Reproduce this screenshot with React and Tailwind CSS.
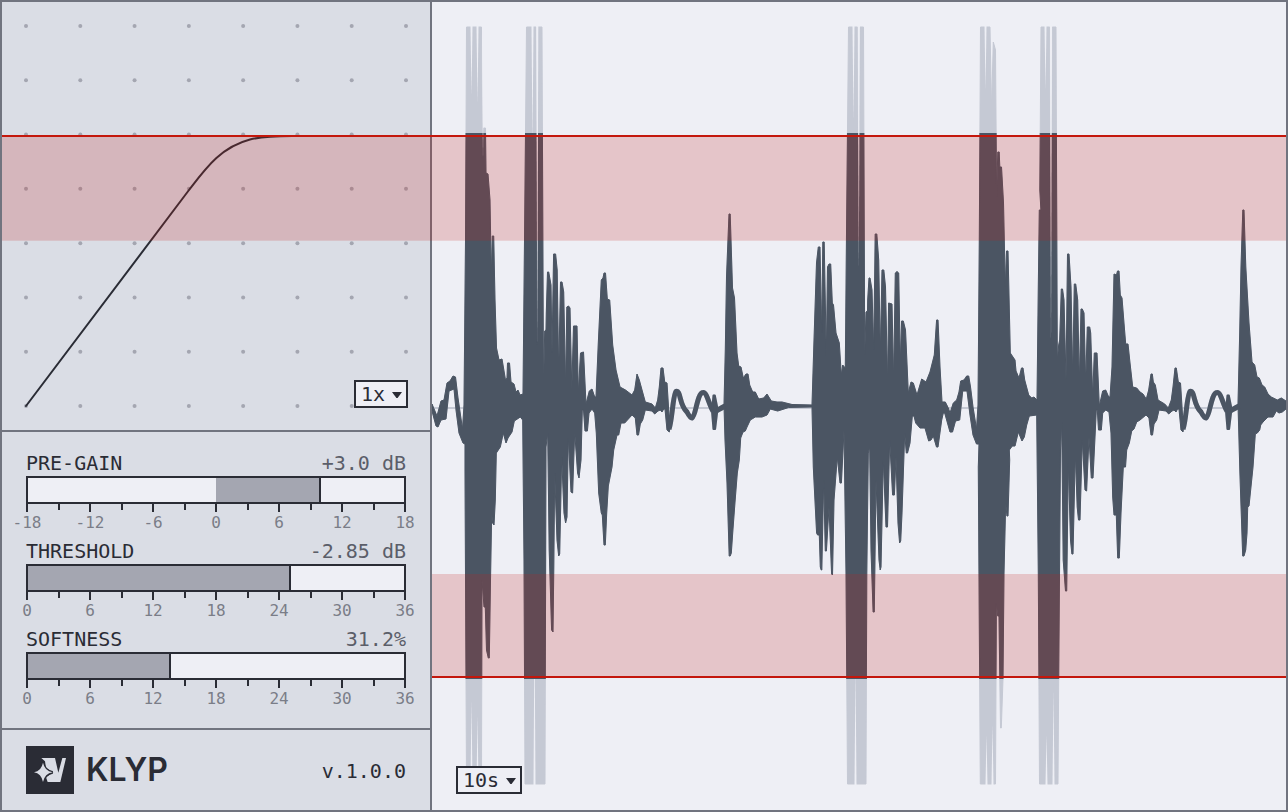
import { useState } from 'react';

// Upper edge left to right, then the lower edge back again.
const WAVE_START =
  'M432 404 L437 416 441 401 444 400 447 383 450 381 453 376 455.5 377 458 398 462.5 429 464 405 465.5 240 466.5 27 481.5 27 482.5 160 483.5 128 485.5 128 486 173 488 174 490 200 491.3 275 492.3 236 493.7 236 495 300 496.5 348 499 360 502 359 505.5 380 507 378 507.5 363 509.5 363 511 382 514 384 516 392 518 390 520 395 523 394 524.5 240 526.5 27 536 27 537 345 538 27 542 27 543.5 390 544.7 331 546 330 546.3 313 547.5 272 548.7 272 551 285 552 353 553.6 254 555.6 254 557.2 270 558.7 373 560.5 282 562 282 563.7 292 565.6 387 566.8 307 568.5 306 570 308 571.8 390 573.5 326 577 326 578.3 393 580.5 353 583.5 352 586 404 589.3 391 592 389 594.7 397 596 397 598.3 343 601.3 280 603 278 604 273 605.5 273 607.3 299 609.7 300 612.7 345 616 370 620 387 625.5 390 632 395 634.7 390 637 374 639.3 380 642 390 645.3 402 652 404 655.3 408 657.7 400 659.3 387 661 368 663 368 664.7 382 667 383 669 415 671 420 669.3 432 667 430 665 409 663.7 409 662 412 660.3 410 658 411 654.7 414 652 411 645.3 410 642.7 420 640.3 424 638.5 435 637 435 635.3 418 632 415 624.7 423 621 423 618.7 435 617 435 613.7 450 612 467 608.3 486 606.7 513 605.3 545 604 545 602.3 515 601.3 513 598.7 493 596.3 433 594.7 413 592 409 589 413 587.4 431 585 431 583.5 410 582.3 410 581 460 579 478 577.6 473 574.7 432 572.6 493 571 492 568.3 437 567 517 565.6 523 564 513 561.7 457 559.7 554 558.7 556 557 540 554.7 473 553.8 567 553 632 551.6 630 549.2 550 547.7 433 546 447 545 784 525 784 524 560 522.7 420 520.3 417 514.3 421 512 432 508 438 506 443 503.3 433 500.3 447 496.3 453 495.3 500 494 525 492.6 523 491.7 513 490.5 580 489.3 658 488.3 658 486.5 650 485.3 607 484 607 482 580 481.5 784 466.5 784 465 470 465 444 463 443 459 433 456 410 454 389 449 391 446 419 441 420 438 427 436 426 432 411 Z';

const WAVE_MIDDLE =
  'M724 405 L725.3 350 726.5 277 729 214 730.2 214 732.5 288 734.5 298 737 353 738.7 366 741 367 743.3 378 746 374 748 374 749.7 385 752.7 392 755.3 392 758.7 399 763.7 398 767 394 771.3 401 777 402 782 402 792 404.5 812 405 814 340 816.5 263 818.3 247 820 247 821.7 333 822.8 242 824.2 242 826.3 357 827.5 267 829 264 830.7 264 832.3 303 833.5 305 836 333 839.3 343 841.3 375 842.7 365 845.3 368 846.5 233 848.5 27 857.5 27 858.7 260 860 27 863.5 27 864.7 355 866 312 867.5 311 867.7 300 869 278 870 278 872 290 873.7 350 875.2 234 876.8 234 878.7 260 880.3 353 882 270 883.8 270 885.5 287 887.6 383 888.6 303 892 304 893.6 380 895.3 273 897 271.5 898.7 273 900.3 363 901.6 321 903.3 321 905.5 330 908.3 393 911 382 913.3 383 917 395 921.7 379 926 382 930 372 934.3 355 936.6 320 938 320 940 367 942 402 945.3 402 948.3 408 950 413 953.3 403 956.7 400 959 392 960.7 381 964 380 966.7 376 968.7 376 970.5 387 973 407 976.5 429 978 405 979.3 240 980.5 27 990 27 991.5 110 993.3 42 995.5 50 996.6 197 997.8 152 999.2 152 999.8 167 1001.5 167 1003.5 203 1005.3 287 1006.5 251 1008 251 1010.3 353 1012.3 356 1015 360 1016 371 1019 378 1021.5 368 1023 368 1024.7 380 1028.7 395 1031.7 398 1034 397 1037 400 1038.3 287 1039.3 210 1040.9 210 1039.8 190 1041 27 1049.7 27 1050.7 340 1052.3 27 1056 27 1057.3 360 1058.7 345 1059.7 340 1061.3 289 1062.5 289 1064 300 1066 380 1067.5 254 1069 254 1071 287 1072.7 377 1074.3 284 1075.7 284 1077.7 300 1079.3 383 1081 309 1082.3 309 1084 313 1085.7 383 1087.3 327 1089.7 327 1090.7 333 1092.7 397 1094.3 353 1097 353 1099.3 406 1102.7 391 1105.7 390 1108.7 397 1110 397 1112 367 1114 274 1116.5 275 1117.5 271 1119 271 1120.3 295 1122 298 1124.3 327 1125.7 344 1128 344 1130 363 1132.7 387 1136.7 388 1140 392 1143 394 1146.3 399 1148.7 390 1151 374 1152.3 374 1153.3 382 1155.3 385 1158 400 1164.7 404 1168.3 408 1171.3 400 1173 387 1175 368 1176.3 368 1178.3 382 1180.5 383 1182.5 415 1184.5 420 1183 432 1181 430 1179 409 1177.5 409 1176 412 1174 410 1172 411 1168.7 414 1166 411 1159 410 1156.7 420 1154 424 1152.5 435 1151 435 1149 418 1146 415 1140 420 1136.7 422 1134 429 1131.7 431 1129.3 443 1126.7 450 1125.5 467 1123.3 467 1121 513 1119.3 558 1117.7 558 1116.3 515 1114 515 1112.7 497 1111 433 1109 412 1105.7 410 1102.7 413 1101.3 430 1098.5 430 1097.3 410 1096.3 410 1093 478 1091.3 478 1089 437 1086.6 491 1085 490 1082.3 440 1080 520 1078.5 520 1077.2 507 1075.3 453 1073 554 1071.9 554 1070.5 540 1068.3 463 1066.7 591 1065.5 591 1063.2 560 1061.7 422 1060.5 450 1058.7 679 1058 784 1039.5 784 1038.3 573 1036.7 415 1029.3 416 1026.7 425 1024.3 437 1022 441 1018.3 432 1015 446 1012.3 446 1009.3 450 1009.7 460 1008 516 1006.9 516 1005.7 503 1004 573 1003 679 1001.3 728 1000.5 728 999.8 679 999 616 997.7 616 996.4 603 995.5 784 980.3 784 978.3 467 979 444 976.5 444 973 435 970 415 967 391 962.7 391 959.7 420 955.5 421 952.5 432 950 432 944.7 413 943.3 413 941.7 420 938 447 936.5 447 933.3 436 931 440 928.7 441 925 428 920 428 915.7 423 914 416 912.3 416 910 443 907.5 453 906.3 453 904.7 433 902 513 900.7 541 899.6 543 898 523 896 457 894.4 495 892.6 495 889.7 440 887.5 527 886 527 883.3 460 881 567 880.2 570 879 560 876 480 874.3 612 873.1 612 871 550 869.7 447 868.3 453 866.8 573 866 784 847.5 784 846 573 844 430 841.4 483 840 483 837.3 457 834 500 832.5 575 831.6 574 829 507 826.4 551 825.3 551 823.7 480 821.8 570 821.2 570 820.3 567 819.3 535 817.6 535 816.6 533 813.3 467 812 407 788.7 407.5 777.7 411 770.3 409 767 415 762 417 755.3 417 750.3 420 747 427 745.3 431 743 432 740.7 438 739.3 460 737.3 473 735 502 732.7 533 731.3 553 730.2 556 729.2 556 727 483 725 440 Z';

const WAVE_END =
  'M1238 404 L1239.7 333 1241 267 1242.8 210 1244 210 1245.8 267 1249 323 1252 362 1254.7 365 1257 377 1259.3 378 1262 385 1264.7 387 1268 394 1271.3 397 1277.3 400 1281.3 398 1286 401 1286 409 1282.3 412 1279 413 1276.3 411 1273 417 1268 417 1263 422 1260.7 425 1259.7 430 1257.3 433 1255.3 434 1253 467 1249 506 1247.7 507 1247 533 1245.7 550 1244 556 1242.7 556 1239.9 473 Z';

// Low frequency tail between two hits, starts at x=669.
const RIPPLE =
  'M669 429 C672 422 673 394 676 391.5 C681 390 679 405 687 412 Q690 418 692 418 C696 416 697 393 703 392.5 C707 392 709 405 713 411 M714 412 Q718 410 725 406';
const RIPPLE_PEAK = 'M712 411 L713.5 395.5 714.8 395.5 717.5 409 715.1 429 713.5 429 Z';

// Gaps between single cycles: [x, edge y, tip y]
const OUTER_GAPS = [
  [471.5, 26, 96],
  [477.5, 26, 104],
  [532.5, 26, 146],
  [853.5, 26, 120],
  [985.5, 26, 90],
  [1045.5, 26, 90],
  [471.5, 785, 700],
  [477.5, 785, 715],
  [534.5, 785, 620],
  [855.5, 785, 665],
  [992.5, 785, 725],
  [986.5, 785, 735],
  [1046.5, 785, 735],
  [1053.5, 785, 690],
];
const INNER_GAPS = [
  [483, 26, 160],
  [537.3, 26, 345],
  [858.8, 26, 270],
  [1051, 26, 345],
];

const CURVE = 'M26 406 L189 190 C206 168 221 147 250 139.5 Q264 136 292 136';

const GRID = [0, 1, 2, 3, 4, 5, 6, 7].map((i) => 26 + (i * 380) / 7);

const PARAMS = [
  { id: 'pre-gain', label: 'PRE-GAIN', value: '+3.0 dB', from: 50, pos: 78, scale: [-18, -12, -6, 0, 6, 12, 18] },
  { id: 'threshold', label: 'THRESHOLD', value: '-2.85 dB', from: 0, pos: 70, scale: [0, 6, 12, 18, 24, 30, 36] },
  { id: 'softness', label: 'SOFTNESS', value: '31.2%', from: 0, pos: 38, scale: [0, 6, 12, 18, 24, 30, 36] },
];

export default function App() {
  return (
    <div className="flex h-screen border-2 border-[#71747f] bg-[#eeeff5] text-xl leading-6 text-[#2a2c35] font-['DejaVu_Sans_Mono',monospace]">
      <aside className="flex w-[430px] shrink-0 flex-col border-r-2 border-[#71747f] bg-[#dadde5]">
        <TransferGraph />
        <section className="space-y-1.5 border-b-2 border-[#71747f] px-6 py-[19px]">
          {PARAMS.map((p) => (
            <Param key={p.id} {...p} />
          ))}
        </section>
        <footer className="flex flex-1 items-center gap-3 px-6">
          <Logo />
          <h1 className="text-[32px] leading-10 font-semibold font-['Inter',sans-serif]">KLYP</h1>
          <span className="ml-auto pt-0.5">v.1.0.0</span>
        </footer>
      </aside>
      <Waveform />
    </div>
  );
}

function TransferGraph() {
  return (
    <section className="relative h-[430px] border-b-2 border-[#71747f]">
      <svg viewBox="2 2 428 428" className="block h-[428px] w-[428px] overflow-visible">
        {GRID.map((y) => GRID.map((x) => <circle key={`${x}-${y}`} cx={x} cy={y} r="2" fill="#a4a6b1" />))}
        <path d={CURVE} fill="none" stroke="#2a2c35" strokeWidth="2" strokeLinecap="round" />
        <rect x="2" y="136" width="430" height="104.7" fill="#c11c19" fillOpacity="0.2" />
        <rect x="2" y="135" width="430" height="2" fill="#c4170c" />
      </svg>
      <Picker label="Oversampling" options={['1x', '2x', '4x']} className="right-[22px] bottom-[22px] w-[54px]" />
    </section>
  );
}

function Gaps({ items }) {
  return items.map(([x, edge, tip]) => (
    <path key={`${x}-${edge}`} d={`M${x - 1} ${edge} H${x + 1} L${x} ${tip} Z`} fill="#eeeff5" />
  ));
}

function Waveform() {
  return (
    <main className="relative min-w-0 flex-1">
      <svg viewBox="432 2 854 808" preserveAspectRatio="none" className="absolute inset-0 h-full w-full">
        <defs>
          <clipPath id="ceiling">
            <rect x="432" y="133" width="854" height="546" />
          </clipPath>
          <g id="wave" stroke="currentColor" strokeLinejoin="round">
            <path d={WAVE_START} />
            <path d={WAVE_MIDDLE} />
            <path d={WAVE_END} />
            {[0, 514].map((dx) => (
              <g key={dx} transform={`translate(${dx} 0)`}>
                <path d={RIPPLE} fill="none" strokeWidth="5" />
                <path d={RIPPLE_PEAK} strokeWidth="2" />
              </g>
            ))}
          </g>
        </defs>
        <rect x="432" y="407" width="854" height="2" fill="#c5c9d4" />
        <use href="#wave" className="fill-current text-[#c5c9d4]" />
        <Gaps items={OUTER_GAPS} />
        <g clipPath="url(#ceiling)">
          <use href="#wave" className="fill-current text-[#4b5563]" />
        </g>
        <Gaps items={INNER_GAPS} />
        <g fill="#c11c19" fillOpacity="0.2">
          <rect x="432" y="136" width="854" height="104.7" />
          <rect x="432" y="574" width="854" height="103" />
        </g>
        <g fill="#c4170c">
          <rect x="432" y="135" width="854" height="2" />
          <rect x="432" y="676" width="854" height="2" />
        </g>
      </svg>
      <Picker label="Time window" options={['10s', '5s', '1s']} className="bottom-4 left-6 w-[66px]" />
    </main>
  );
}

function Param({ id, label, value, from, pos: initial, scale }) {
  const [pos, setPos] = useState(initial);
  return (
    <div>
      <div className="mb-px flex justify-between">
        <label htmlFor={id}>{label}</label>
        <output htmlFor={id} className="text-[#5b5e69]">{value}</output>
      </div>
      <div className="relative h-7 border-2 border-[#2a2c35] bg-[#eeeff5]">
        <div
          className="absolute inset-y-0 border-r-2 border-[#2a2c35] bg-[#a4a6b1]"
          style={{ left: `${Math.min(from, pos)}%`, width: `${Math.abs(pos - from)}%` }}
        />
        <input
          id={id}
          type="range"
          min="0"
          max="100"
          step="0.5"
          value={pos}
          onChange={(e) => setPos(Number(e.target.value))}
          className="absolute inset-0 h-full w-full cursor-ew-resize opacity-0"
        />
      </div>
      <div className="flex h-2 justify-between">
        {Array.from({ length: 13 }, (_, i) => (
          <div key={i} className={`w-0.5 bg-[#2a2c35] ${i % 2 ? 'h-1.5' : 'h-2'}`} />
        ))}
      </div>
      <div className="mt-px flex justify-between px-px text-base leading-5 text-[#7a7d88]">
        {scale.map((n) => (
          <span key={n} className="flex w-0 justify-center">{n}</span>
        ))}
      </div>
    </div>
  );
}

function Picker({ label, options, className }) {
  return (
    <div className={`absolute h-7 ${className}`}>
      <select
        aria-label={label}
        className="block h-full w-full appearance-none border-2 border-[#2a2c35] bg-[#eeeff5] pl-[5px] leading-6"
      >
        {options.map((o) => (
          <option key={o}>{o}</option>
        ))}
      </select>
      <svg viewBox="0 0 10 6" className="pointer-events-none absolute top-3 right-1.5 h-1.5 w-2.5">
        <path d="M0 0 H10 L5.6 6 H4.4 Z" fill="#2a2c35" />
      </svg>
    </div>
  );
}

function Logo() {
  return (
    <svg viewBox="0 0 144 144" className="size-12">
      <rect width="144" height="144" fill="#2a2c35" />
      <path d="M46 36 H87 L97 80 L109 36 H120 L103 108 H65 L60 94 L82 79 L60 66 L57 46 Z" fill="#dadde5" />
      <path
        d="M24 79 Q46 75 51 50 Q56 75 80 79 Q56 83 51 108 Q46 83 24 79 Z"
        fill="#dadde5"
        stroke="#2a2c35"
        strokeWidth="8"
        paintOrder="stroke"
      />
    </svg>
  );
}
